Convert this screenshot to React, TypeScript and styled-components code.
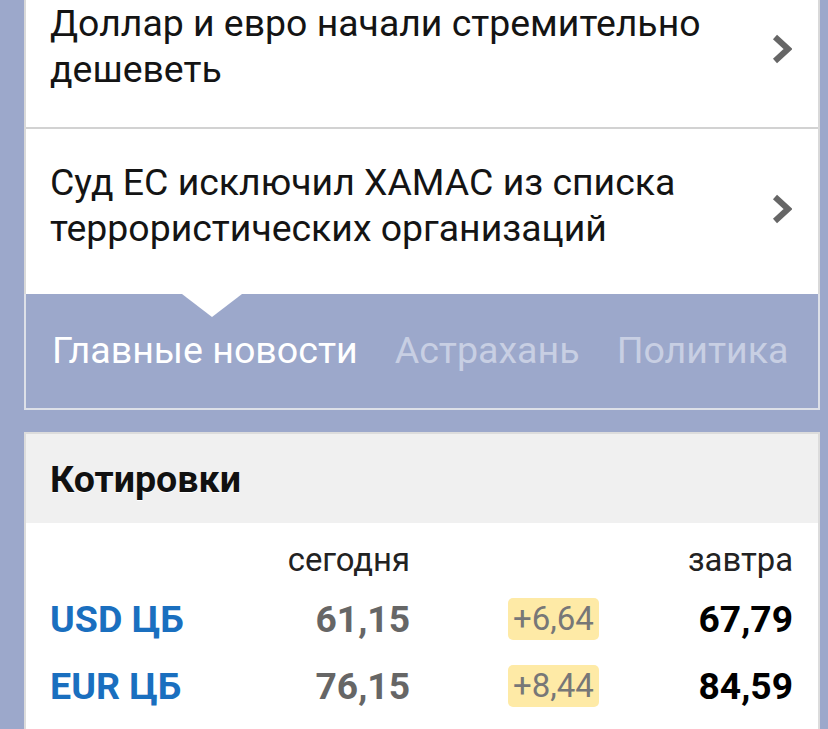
import React from 'react'
import styled, { createGlobalStyle } from 'styled-components'

const GlobalStyle = createGlobalStyle`
  html, body {
    margin: 0;
    padding: 0;
    background: #9ca8cb;
    font-family: Roboto, "Noto Sans", sans-serif;
    overflow: hidden;
  }
`

const news = [
  'Доллар и евро начали стремительно дешеветь',
  'Суд ЕС исключил ХАМАС из списка террористических организаций',
]

const tabs = ['Главные новости', 'Астрахань', 'Политика']

const rates = [
  { name: 'USD ЦБ', today: '61,15', diff: '+6,64', tomorrow: '67,79' },
  { name: 'EUR ЦБ', today: '76,15', diff: '+8,44', tomorrow: '84,59' },
]

export default function App() {
  return (
    <>
      <GlobalStyle />
      <Page>
        <NewsList>
          {news.map((title) => (
            <NewsItem key={title}>
              <NewsTitle>{title}</NewsTitle>
              <Chevron viewBox="0 0 20 30">
                <path d="M3 3 L16 15 L3 27" />
              </Chevron>
            </NewsItem>
          ))}
        </NewsList>

        <TabBar>
          {tabs.map((t, i) => (
            <Tab key={t} $active={i === 0}>{t}</Tab>
          ))}
        </TabBar>

        <QuotesCard>
          <QuotesHeader>Котировки</QuotesHeader>
          <QuotesTable>
            <span />
            <ColHead>сегодня</ColHead>
            <span />
            <ColHead>завтра</ColHead>
            {rates.map((r) => (
              <React.Fragment key={r.name}>
                <Currency>{r.name}</Currency>
                <Today>{r.today}</Today>
                <DiffCell>
                  <Diff>{r.diff}</Diff>
                </DiffCell>
                <Tomorrow>{r.tomorrow}</Tomorrow>
              </React.Fragment>
            ))}
          </QuotesTable>
        </QuotesCard>
      </Page>
    </>
  )
}

const Page = styled.div`
  padding: 0 8px 0 24px;
  width: 828px;
  height: 729px;
  box-sizing: border-box;
  overflow: hidden;
`

const NewsList = styled.div`
  margin-top: -30px;
  background: #fff;
  border-left: 2px solid #d9d9d9;
  border-right: 2px solid #d9d9d9;
`

const NewsItem = styled.div`
  height: 159px;
  box-sizing: border-box;
  display: flex;
  align-items: flex-start;
  justify-content: space-between;
  padding: 30px 26px 30px 24px;
  border-bottom: 2px solid #d2d2d2;

  &:last-child {
    border-bottom: none;
    height: 165px;
    padding-bottom: 36px;
  }
`

const NewsTitle = styled.div`
  font-size: 37.4px;
  line-height: 46px;
  color: #141414;
  max-width: 690px;
`

const Chevron = styled.svg`
  align-self: center;
  width: 20px;
  height: 30px;
  flex-shrink: 0;
  fill: none;
  stroke: #666;
  stroke-width: 6;
  stroke-linejoin: miter;
`

const TabBar = styled.div`
  position: relative;
  height: 116px;
  box-sizing: border-box;
  display: flex;
  align-items: center;
  gap: 37px;
  padding: 0 0 2px 26px;
  border: 2px solid #dde0e8;
  border-top: none;

  &::before {
    content: '';
    position: absolute;
    top: 0;
    left: 156px;
    border-left: 30px solid transparent;
    border-right: 30px solid transparent;
    border-top: 23px solid #fff;
  }
`

const Tab = styled.div<{ $active?: boolean }>`
  font-size: 37.6px;
  color: ${(p) => (p.$active ? '#fff' : '#c8cfe3')};
  white-space: nowrap;
`

const QuotesCard = styled.div`
  margin-top: 22px;
  background: #fff;
  border: 2px solid #dcdcdc;
  border-bottom: none;
`

const QuotesHeader = styled.div`
  height: 89px;
  display: flex;
  align-items: center;
  padding-left: 24px;
  background: #f0f0f0;
  font-size: 37.6px;
  font-weight: 700;
  color: #111;
  text-shadow: 0 1px 0 #fff;
`

const QuotesTable = styled.div`
  display: grid;
  grid-template-columns: 200px 160px 1fr auto;
  grid-template-rows: 50px 67px 67px;
  align-items: center;
  padding: 12px 25px 40px 24px;
`

const ColHead = styled.div`
  font-size: 32.8px;
  color: #222;
  text-align: right;
`

const Currency = styled.div`
  font-size: 37.6px;
  font-weight: 700;
  color: #1a6fbf;
`

const Today = styled.div`
  font-size: 37.2px;
  font-weight: 700;
  color: #666;
  text-align: right;
`

const DiffCell = styled.div`
  padding-left: 98px;
`

const Diff = styled.span`
  display: inline-flex;
  align-items: center;
  height: 42px;
  padding: 0 5px;
  border-radius: 5px;
  background: #feeaa6;
  color: #777;
  font-size: 33px;
`

const Tomorrow = styled.div`
  font-size: 37.2px;
  font-weight: 700;
  color: #000;
  text-align: right;
`
